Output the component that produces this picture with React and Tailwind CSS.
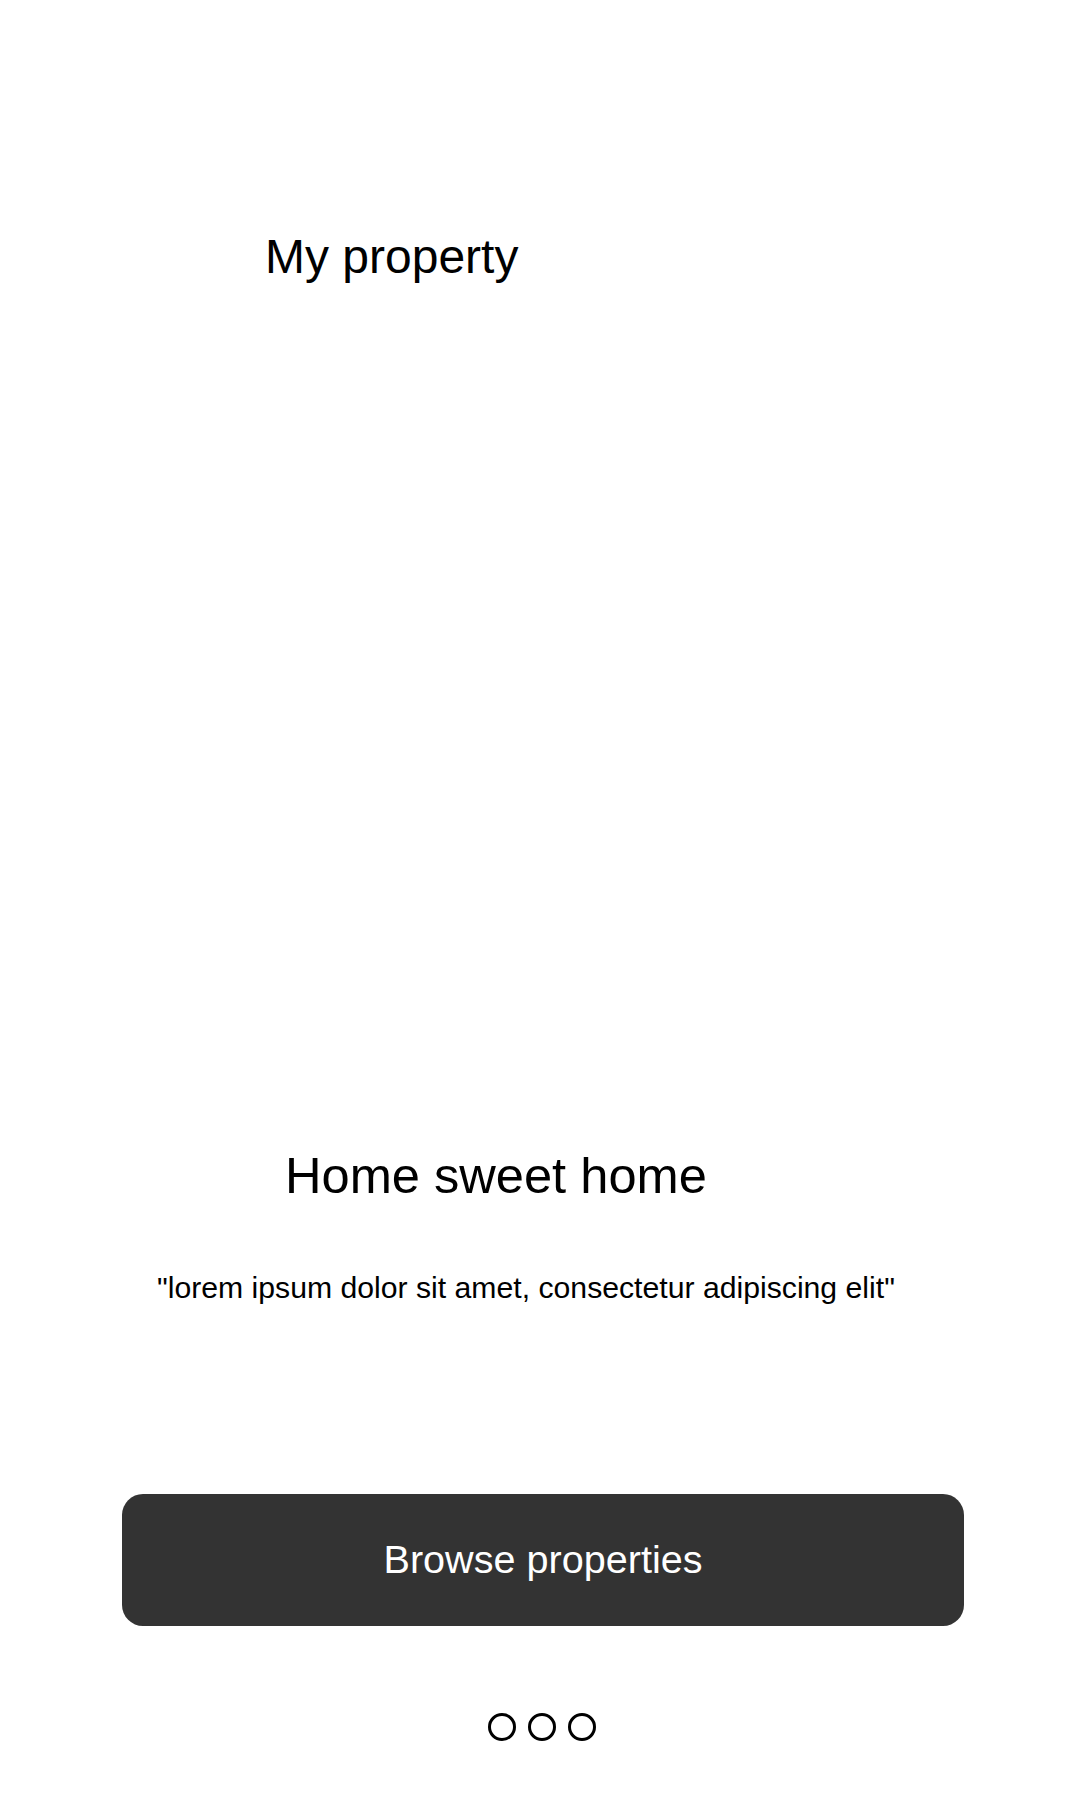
import React from "react";

const Dot = () => (
  <span className="block w-[28px] h-[28px] rounded-full border-[3px] border-black" />
);

const App = () => {
  return (
    <div
      className="w-[1080px] h-[1800px] bg-white text-black"
      style={{ fontFamily: '"Liberation Sans", Arial, sans-serif' }}
    >
      <div className="pt-[233px] pl-[265px]">
        <h1 className="text-[48px] leading-none font-normal">My property</h1>
      </div>

      <div className="mt-[870px] pl-[285px]">
        <h2 className="text-[50.6px] leading-none font-normal">Home sweet home</h2>
      </div>

      <div className="mt-[71px] pl-[157px]">
        <p className="text-[30.2px] leading-none">
          "lorem ipsum dolor sit amet, consectetur adipiscing elit"
        </p>
      </div>

      <div className="mt-[191px] pl-[122px]">
        <button className="w-[842px] h-[132px] rounded-[21px] bg-[#333333] text-white text-[39.6px] leading-none flex items-center justify-center">
          Browse properties
        </button>
      </div>

      <div className="mt-[87px] pl-[488px] flex gap-[12px]">
        <Dot />
        <Dot />
        <Dot />
      </div>
    </div>
  );
};

export default App;
